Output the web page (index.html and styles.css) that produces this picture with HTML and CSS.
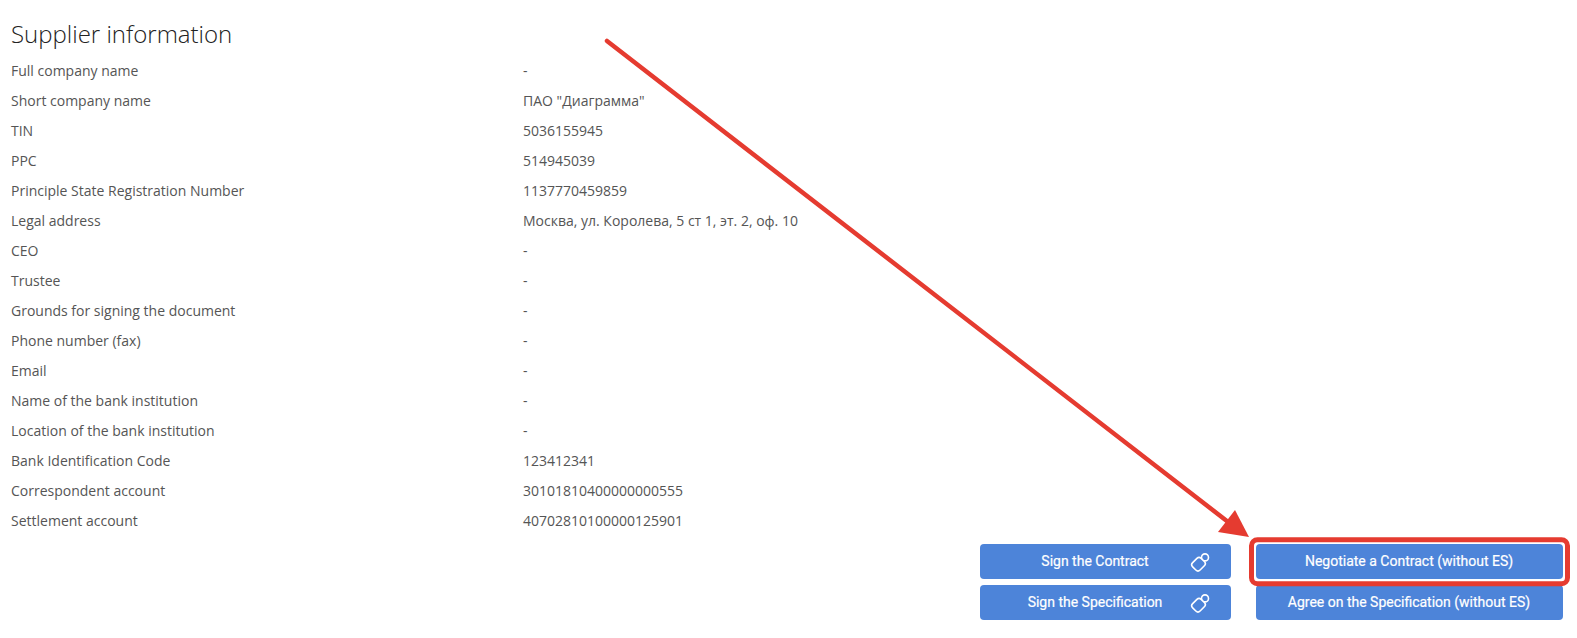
FILE: index.html
```html
<!DOCTYPE html>
<html lang="en">
<head>
    <meta charset="UTF-8">
    <meta name="viewport" content="width=device-width, initial-scale=1.0">
    <title>Supplier information</title>
    <link rel="stylesheet" href="styles.css">
</head>
<body>
    <div class="page">
        <h2 class="title">Supplier information</h2>
        <div class="info">
            <div class="row"><span>Full company name</span><span>-</span></div>
            <div class="row"><span>Short company name</span><span>ПАО "Диаграмма"</span></div>
            <div class="row"><span>TIN</span><span>5036155945</span></div>
            <div class="row"><span>PPC</span><span>514945039</span></div>
            <div class="row"><span>Principle State Registration Number</span><span>1137770459859</span></div>
            <div class="row"><span>Legal address</span><span>Москва, ул. Королева, 5 ст 1, эт. 2, оф. 10</span></div>
            <div class="row"><span>CEO</span><span>-</span></div>
            <div class="row"><span>Trustee</span><span>-</span></div>
            <div class="row"><span>Grounds for signing the document</span><span>-</span></div>
            <div class="row"><span>Phone number (fax)</span><span>-</span></div>
            <div class="row"><span>Email</span><span>-</span></div>
            <div class="row"><span>Name of the bank institution</span><span>-</span></div>
            <div class="row"><span>Location of the bank institution</span><span>-</span></div>
            <div class="row"><span>Bank Identification Code</span><span>123412341</span></div>
            <div class="row"><span>Correspondent account</span><span>30101810400000000555</span></div>
            <div class="row"><span>Settlement account</span><span>40702810100000125901</span></div>
        </div>
        <div class="actions">
            <button class="btn">
                <span class="btn-label">Sign the Contract</span>
                <svg class="token" viewBox="0 0 20 20"><circle cx="15" cy="5.4" r="3.5"/><rect x="3.25" y="6.2" width="10.5" height="12" rx="3" transform="rotate(45 8.5 12.2)"/></svg>
            </button>
            <button class="btn">
                <span class="btn-label">Negotiate a Contract (without ES)</span>
            </button>
            <button class="btn">
                <span class="btn-label">Sign the Specification</span>
                <svg class="token" viewBox="0 0 20 20"><circle cx="15" cy="5.4" r="3.5"/><rect x="3.25" y="6.2" width="10.5" height="12" rx="3" transform="rotate(45 8.5 12.2)"/></svg>
            </button>
            <button class="btn">
                <span class="btn-label">Agree on the Specification (without ES)</span>
            </button>
        </div>
    </div>

    <!-- red annotation drawn over the screenshot -->
    <svg class="markup" viewBox="0 0 1577 638">
        <line x1="607" y1="41" x2="1232" y2="525" stroke="#e53b30" stroke-width="4.5" stroke-linecap="round"/>
        <polygon points="1249,537 1235,510 1218,532" fill="#e53b30"/>
        <rect x="1251.5" y="539.7" width="316" height="44" rx="6" fill="none" stroke="#e53b30" stroke-width="5"/>
    </svg>
</body>
</html>
```

FILE: styles.css
```css
body {
    font-family: "Open Sans", Arial, sans-serif;
    margin: 0;
    background-color: #fff;
    color: #555;
}
.page {
    padding: 17px 14px 0 11px;
}
.title {
    margin: 0 0 6px;
    font-size: 24px;
    font-weight: 300;
    line-height: 33px;
    color: #222;
}
.row {
    display: grid;
    grid-template-columns: 512px 1fr;
    height: 30px;
    line-height: 30px;
    font-size: 14px;
}
.actions {
    display: grid;
    grid-template-columns: 251px 307px;
    justify-content: end;
    gap: 6px 25px;
    margin-top: 8px;
}
.btn {
    display: flex;
    align-items: center;
    height: 35px;
    padding: 0 21px 0 20px;
    background-color: #4d84d9;
    color: #fff;
    border: none;
    border-radius: 4px;
    font-family: Roboto, Arial, sans-serif;
    font-size: 14px;
    font-weight: 400;
    -webkit-text-stroke: 0.2px #fff;
}
.btn-label {
    flex: 1;
    padding-bottom: 2px;
    text-align: center;
}
.token {
    width: 20px;
    height: 20px;
    fill: #4d84d9;
    stroke: #fff;
    stroke-width: 1.6;
}
.markup {
    position: absolute;
    top: 0;
    left: 0;
    width: 1577px;
    height: 638px;
    pointer-events: none;
}
```
